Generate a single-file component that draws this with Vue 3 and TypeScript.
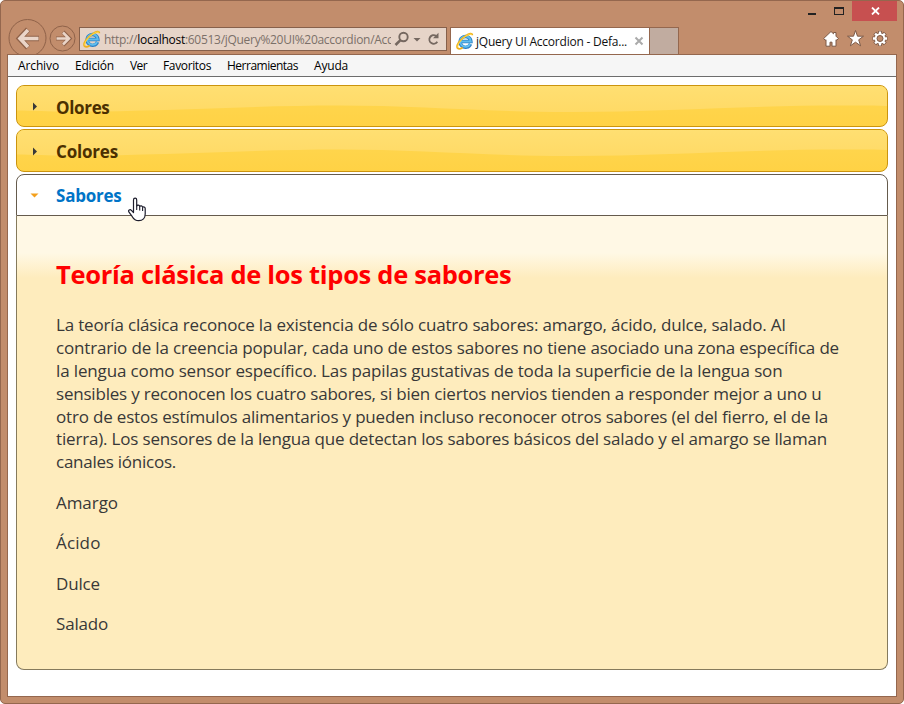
<script setup lang="ts">
import { ref } from 'vue'

interface TextLine {
  text: string
  width: number
}

const menus: TextLine[] = [
  { text: 'Archivo', width: 41 },
  { text: 'Edición', width: 39 },
  { text: 'Ver', width: 17 },
  { text: 'Favoritos', width: 48 },
  { text: 'Herramientas', width: 71 },
  { text: 'Ayuda', width: 34 },
]

const sections: TextLine[] = [
  { text: 'Olores', width: 53.5 },
  { text: 'Colores', width: 62 },
  { text: 'Sabores', width: 65.5 },
]
const active = ref(2)

const theory: TextLine[] = [
  { text: 'La teoría clásica reconoce la existencia de sólo cuatro sabores: amargo, ácido, dulce, salado. Al', width: 729.5 },
  { text: 'contrario de la creencia popular, cada uno de estos sabores no tiene asociado una zona específica de', width: 783 },
  { text: 'la lengua como sensor específico. Las papilas gustativas de toda la superficie de la lengua son', width: 726.5 },
  { text: 'sensibles y reconocen los cuatro sabores, si bien ciertos nervios tienden a responder mejor a uno u', width: 765.5 },
  { text: 'otro de estos estímulos alimentarios y pueden incluso reconocer otros sabores (el del fierro, el de la', width: 772 },
  { text: 'tierra). Los sensores de la lengua que detectan los sabores básicos del salado y el amargo se llaman', width: 771 },
  { text: 'canales iónicos.', width: 120 },
]

const flavours: TextLine[] = [
  { text: 'Amargo', width: 62 },
  { text: 'Ácido', width: 44.5 },
  { text: 'Dulce', width: 44 },
  { text: 'Salado', width: 52 },
]

// Adjusts tracking so a single line of text takes up the given width.
const vFit = {
  mounted(el: HTMLElement, binding: { value: number }) {
    const count = (el.textContent ?? '').length
    const natural = el.getBoundingClientRect().width
    if (count > 1) el.style.letterSpacing = `${(binding.value - natural) / count}px`
  },
}
</script>

<template>
  <div class="window">
    <header class="chrome">
      <div class="nav">
        <svg class="nav-buttons" width="72" height="38" viewBox="0 0 72 38">
          <circle cx="19.5" cy="21" r="18.5" fill="none" stroke="#8f6249" />
          <circle cx="54.5" cy="21.5" r="12.5" fill="none" stroke="#8f6249" />
          <path d="M20 12.500 11.500 21.500 20 30.500M12 21.500H31" fill="none" stroke="#8f6249" stroke-width="5.500" />
          <path d="M20 13 12 21.500 20 30M12.500 21.500H30.500" fill="none" stroke="#ead5c8" stroke-width="3.600" />
          <path d="M55 15 61.500 21.500 55 28M60.500 21.500H48" fill="none" stroke="#8f6249" stroke-width="4" />
          <path d="M55 15.500 61 21.500 55 27.500M60.500 21.500H48.500" fill="none" stroke="#ead5c8" stroke-width="2.500" />
        </svg>

        <div class="address">
          <svg class="ie" width="18" height="18" viewBox="0 0 18 18">
            <path d="M14.500 12A5.400 5.400 0 1 1 14.900 9.500H5" fill="none" stroke="#2d7fc4" stroke-width="3.400" />
            <path d="M14.200 12A5.300 5.300 0 1 1 14.800 9.500H5" fill="none" stroke="#5fbdee" stroke-width="2" />
            <path d="M1.700 16.300C-.5 14 4 7.500 9.500 4 13 1.600 16.500.6 16.300 3.300M1.700 16.300c1.200 1 3.300.3 5-.9" fill="none" stroke="#eeb01c" stroke-width="1.800" />
            <path d="M2 15.600C.7 13.500 4.500 7.800 9.800 4.200 12.500 2.400 15.500 1.300 16 2.600" fill="none" stroke="#ffdc50" stroke-width="1" />
          </svg>
          <span class="url"><span v-fit="288.5">http://<b>localhost</b>:60513/jQuery%20UI%20accordion/Acc</span></span>
          <svg class="tools" width="50" height="20" viewBox="0 0 50 20">
            <circle cx="10.500" cy="8" r="4.200" fill="none" stroke="#756860" stroke-width="1.900" />
            <path d="M7.700 10.800 2.500 16" stroke="#756860" stroke-width="2.600" />
            <path d="M20.500 9h7L24 12.500z" fill="#756860" />
            <path d="M44.300 12.800A4.300 4.300 0 1 1 43 6.800" fill="none" stroke="#756860" stroke-width="1.900" />
            <path d="M45.500 3.800v5.500H40z" fill="#756860" />
          </svg>
        </div>

        <div class="tabs">
          <div class="tab">
            <svg class="ie" width="18" height="18" viewBox="0 0 18 18">
              <path d="M14.500 12A5.400 5.400 0 1 1 14.900 9.500H5" fill="none" stroke="#2d7fc4" stroke-width="3.400" />
              <path d="M14.200 12A5.300 5.300 0 1 1 14.800 9.500H5" fill="none" stroke="#5fbdee" stroke-width="2" />
              <path d="M1.700 16.300C-.5 14 4 7.500 9.500 4 13 1.600 16.500.6 16.300 3.300M1.700 16.300c1.200 1 3.300.3 5-.9" fill="none" stroke="#eeb01c" stroke-width="1.800" />
              <path d="M2 15.600C.7 13.500 4.500 7.800 9.800 4.200 12.500 2.400 15.500 1.300 16 2.600" fill="none" stroke="#ffdc50" stroke-width="1" />
            </svg>
            <span class="tab-title"><span v-fit="151">jQuery UI Accordion - Defa...</span></span>
            <svg width="10" height="10" viewBox="0 0 10 10">
              <path d="m1.500 1.500 7 7m0-7-7 7" stroke="#aaa" stroke-width="2" />
            </svg>
          </div>
          <div class="new-tab"></div>
        </div>
      </div>

      <div class="right">
        <div class="controls">
          <svg width="56" height="20" viewBox="0 0 56 20">
            <path d="M12 12h8v2h-8z" fill="#222" />
            <path d="M38 6h10v8H38zm1 2v5h8V8z" fill="#222" fill-rule="evenodd" />
          </svg>
          <div class="close">
            <svg width="9" height="8" viewBox="0 0 9 8"><path d="m1 .5 7 7m0-7-7 7" stroke="#fff" stroke-width="1.800" /></svg>
          </div>
        </div>
        <svg class="shortcuts" width="66" height="20" viewBox="0 0 66 20">
          <path d="M8 2.500.700 9.500l1.500 1.800.8-.6v6.500h4v-4h2v4h4v-6.500l.8.6 1.500-1.800-2.300-2.300V3.500h-2.500v1.300z" fill="#fff" stroke="#7c5946" stroke-width="1" />
          <path d="m32.500 1.500 2 5.700h6l-4.800 3.600 1.900 6-5.100-3.600-5.100 3.600 1.900-6-4.800-3.600h6z" fill="#fff" stroke="#7c5946" stroke-width="1" />
          <g transform="translate(57 9.500)">
            <path d="M0-7.500V7.500M-7.500 0H7.500M-5.300-5.300 5.300 5.300M5.300-5.300-5.300 5.300" stroke="#7c5946" stroke-width="4" />
            <circle r="5.700" fill="#fff" stroke="#7c5946" />
            <path d="M0-7V7M-7 0H7M-4.900-4.900 4.900 4.900M4.900-4.900-4.900 4.900" stroke="#fff" stroke-width="2.300" />
            <circle r="3" fill="#c28c6b" stroke="#7c5946" />
          </g>
        </svg>
      </div>
    </header>

    <main class="page">
      <nav class="menu">
        <span v-for="m in menus" :key="m.text" v-fit="m.width">{{ m.text }}</span>
      </nav>

      <div class="accordion">
        <h3
          v-for="(s, i) in sections"
          :key="s.text"
          class="head"
          :class="{ open: i === active, tall: i === 1 }"
          @click="active = i"
        >
          <svg v-if="i !== active" class="gloss" width="870" height="41" viewBox="0 0 870 41">
            <defs>
              <linearGradient id="shine" x1="0" y1="0" x2="0" y2="1">
                <stop offset="0" stop-color="#ffdf72" />
                <stop offset="1" stop-color="#ffda66" />
              </linearGradient>
            </defs>
            <path
              d="M0 0H870V20C850 19.500 835 19.500 823 19.500C730 19.500 650 26 553 26C470 26 400 19.500 323 19.500C230 19.500 150 25.500 53 25.500C30 25.500 15 25 0 24.500Z"
              fill="url(#shine)"
            />
          </svg>
          <svg class="arrow" width="12" height="12" viewBox="0 0 12 12">
            <path v-if="i === active" d="M1.500 3.500h8L5.500 7.500z" fill="#f4a01c" />
            <path v-else d="M4 1.500v8l4-4z" fill="#383838" />
          </svg>
          <span v-fit="s.width" class="label">{{ s.text }}</span>
        </h3>

        <section class="panel">
          <h2><span v-fit="455.5">Teoría clásica de los tipos de sabores</span></h2>
          <p><template v-for="l in theory" :key="l.text"><span v-fit="l.width">{{ l.text }}</span><br /></template></p>
          <p v-for="f in flavours" :key="f.text"><span v-fit="f.width">{{ f.text }}</span></p>
        </section>
      </div>
    </main>

    <svg class="pointer" width="20" height="26" viewBox="0 0 20 26">
      <path
        d="M5.500 15.500V3c0-2.400 3.200-2.400 3.200 0v6c.5-1.300 2.800-1.100 3 .4.700-1 2.800-.7 2.900.9.800-.8 2.600-.3 2.600 1.300V17c0 4-2.500 6.700-6.500 6.700-3.500 0-5-1.600-6.400-4L1 15.200c-1.200-2 1-3.300 2.400-1.900z"
        fill="#fff" stroke="#1c1c2c" stroke-width="1.200" stroke-linejoin="round"
      />
      <path d="M8.700 8.500v4.500M11.700 9.500v4M14.600 10.500v3.500" stroke="#1c1c2c" stroke-width="1.100" />
    </svg>
  </div>
</template>

<style>
body {
  background: #fff;
}
</style>

<style scoped>
.window {
  box-sizing: border-box;
  position: relative;
  display: flex;
  flex-direction: column;
  width: 904px;
  height: 704px;
  padding: 0 6px 6px;
  border: 1px solid #94674e;
  border-radius: 5px;
  background: #c28d6c;
  font-family: 'Open Sans', 'Noto Sans', sans-serif;
  overflow: hidden;
}
.chrome {
  display: flex;
  justify-content: space-between;
  height: 53px;
}
.nav {
  display: flex;
  align-items: flex-start;
  padding-top: 16px;
}
.nav-buttons {
  margin-left: 1px;
}
.address {
  box-sizing: border-box;
  display: flex;
  align-items: center;
  width: 368px;
  height: 24px;
  margin-top: 10px;
  margin-left: -1px;
  padding-left: 3px;
  border: 1px solid #86604b;
  background: #e6d4c8;
}
.ie {
  flex: none;
}
.url {
  width: 287px;
  margin-left: 3px;
  padding-top: 2px;
  overflow: hidden;
  font-size: 12px;
  line-height: 20px;
  white-space: nowrap;
  color: #7b7069;
}
.url b {
  font-weight: 400;
  color: #000;
}
.tools {
  flex: none;
  margin-left: 2px;
}
.tabs {
  display: flex;
  margin-top: 10px;
  margin-left: 3px;
}
.tab {
  box-sizing: border-box;
  display: flex;
  align-items: center;
  width: 200px;
  height: 27px;
  padding-left: 5px;
  border: 1px solid #94674e;
  border-bottom: 0;
  background: #fff;
}
.tab-title {
  width: 158px;
  margin-left: 2px;
  font-size: 12px;
  line-height: 20px;
  padding-top: 2px;
  white-space: nowrap;
  color: #111;
}
.new-tab {
  box-sizing: border-box;
  width: 29px;
  height: 27px;
  border: 1px solid #94674e;
  border-width: 1px 1px 0 0;
  background: #c1aca0;
}
.right {
  display: flex;
  flex-direction: column;
  align-items: flex-end;
}
.controls {
  display: flex;
}
.close {
  display: flex;
  align-items: center;
  justify-content: center;
  width: 45px;
  height: 20px;
  padding-left: 1px;
  box-sizing: border-box;
  background: #c75050;
}
.shortcuts {
  margin: 8px 8px 0 0;
}
.page {
  flex: 1;
  border: 1px solid #94674e;
  background: #fff;
}
.menu {
  display: flex;
  gap: 16px;
  height: 21px;
  padding-left: 10px;
  border-bottom: 1px solid #6d6d6d;
  background: #f6f6f6;
  font-size: 12px;
  line-height: 22px;
  white-space: nowrap;
  color: #000;
}
.accordion {
  padding: 8px;
}
.head {
  box-sizing: border-box;
  position: relative;
  display: flex;
  align-items: center;
  height: 42px;
  margin: 0 0 2px;
  padding-left: 12px;
  border: 1px solid #cb940e;
  border-radius: 8px;
  background: linear-gradient(#ffd751, #ffd245);
  overflow: hidden;
  font-size: 17px;
  font-weight: 700;
  line-height: 23px;
  white-space: nowrap;
  color: #4c3000;
  cursor: pointer;
}
.head.tall {
  height: 43px;
}
.head.open {
  margin-bottom: 0;
  border-color: #655b4d;
  border-radius: 8px 8px 0 0;
  background: #fff;
  color: #0074c7;
}
.gloss {
  position: absolute;
  left: 0;
  top: 0;
}
.arrow {
  position: relative;
  top: 1px;
  margin-right: 15px;
}
.label {
  position: relative;
  top: 1px;
}
.head.open .label {
  top: 0;
}
.panel {
  box-sizing: border-box;
  height: 454px;
  padding: 40px 39px 0;
  border: 1px solid #857a5c;
  border-top: 0;
  border-radius: 0 0 8px 8px;
  background: linear-gradient(#fff8e5 0, #fff8e5 37px, #feecbd 62px);
  color: #383838;
}
.panel h2 {
  margin: 0;
  font-size: 25.500px;
  line-height: 36px;
  white-space: nowrap;
  color: #f00;
}
.panel p {
  margin: 0 0 17.600px;
  font-size: 17px;
  line-height: 22.880px;
  white-space: nowrap;
}
.panel h2 + p {
  margin-top: 22px;
}
.pointer {
  position: absolute;
  left: 127px;
  top: 196px;
}
</style>
